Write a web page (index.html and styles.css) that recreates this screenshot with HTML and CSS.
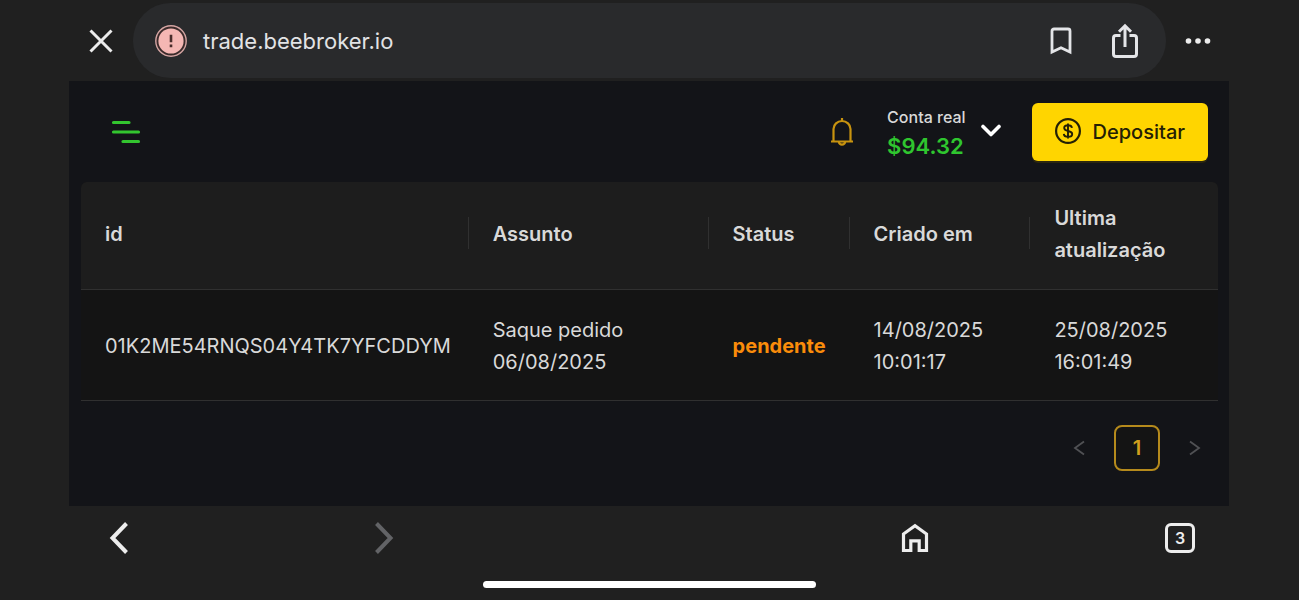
FILE: index.html
```html
<!DOCTYPE html>
<html lang="pt-BR">
<head>
<meta charset="utf-8">
<meta name="viewport" content="width=device-width, initial-scale=1">
<title>trade.beebroker.io</title>
<link rel="stylesheet" href="styles.css">
</head>
<body>
<div class="browser">
  <div class="toolbar">
    <button class="icon-button" type="button" aria-label="Fechar">
      <svg width="24" height="24" viewBox="0 0 24 24" fill="none" stroke="#ececec" stroke-width="3"><path d="M1.500 1.500l21 21M22.500 1.500l-21 21"/></svg>
    </button>
    <div class="address">
      <svg width="32" height="32" viewBox="0 0 32 32"><circle cx="16" cy="16" r="15.2" fill="#3a2a2a" stroke="#d5a5a3" stroke-width="1.4"/><circle cx="16" cy="16" r="12.6" fill="#f5b7b4"/><path d="M16 9.800v7.400M16 19.400v2.800" stroke="#492c2b" stroke-width="2.600"/></svg>
      <span class="address-text">trade.beebroker.io</span>
      <div class="address-actions">
        <button class="icon-button" type="button" aria-label="Favoritar">
          <svg width="22" height="28" viewBox="0 0 22 28" fill="none" stroke="#e4e5e8" stroke-width="2.800"><path d="M2 25V4a2 2 0 0 1 2-2h14a2 2 0 0 1 2 2v21l-9-4.200z"/></svg>
        </button>
        <button class="icon-button" type="button" aria-label="Compartilhar">
          <svg width="28" height="36" viewBox="0 0 28 36" fill="none" stroke="#e4e5e8" stroke-width="3"><path d="M9.500 12.500H5a2.500 2.500 0 0 0-2.500 2.500v16A2.500 2.500 0 0 0 5 33.500h18a2.500 2.500 0 0 0 2.500-2.500V15a2.500 2.500 0 0 0-2.500-2.500h-4.500M14 24V3M8 8.800l6-6 6 6"/></svg>
        </button>
      </div>
    </div>
    <button class="icon-button" type="button" aria-label="Mais opções">
      <svg width="26" height="6" viewBox="0 0 26 6" fill="#ececec"><circle cx="3.500" cy="3" r="2.800"/><circle cx="13" cy="3" r="2.800"/><circle cx="22.500" cy="3" r="2.800"/></svg>
    </button>
  </div>

  <main class="app">
    <header class="app-header">
      <button class="menu-button" type="button" aria-label="Menu">
        <svg width="30" height="24" viewBox="0 0 30 24" stroke="#33c52f" stroke-width="3.200" stroke-linecap="round"><path d="M2.500 2.500h15.500M2.500 12h25M12 21.500h15.500"/></svg>
      </button>
      <div class="header-actions">
        <button class="bell-button" type="button" aria-label="Notificações">
          <svg width="22" height="28" viewBox="0 0 22 28" fill="none" stroke="#c8930f" stroke-width="2.200"><path d="M0 23.500h22M2.500 23.500V11a8.500 8 0 0 1 17 0v12.500M11 0v3M7.800 23.500a3.200 3.200 0 0 0 6.400 0"/></svg>
        </button>
        <button class="account" type="button">
          <span class="account-text"><span class="account-label">Conta real</span><span class="account-value">$94.32</span></span>
          <svg width="22" height="16" viewBox="0 0 22 16" fill="none" stroke="#fff" stroke-width="3.600" stroke-linecap="round" stroke-linejoin="round"><path d="M3 2.500l8 8 8-8"/></svg>
        </button>
        <button class="deposit" type="button">
          <svg width="28" height="30" viewBox="0 0 28 30" fill="none" stroke="#242005" stroke-width="2.200"><circle cx="14" cy="14" r="11.900"/><path stroke-width="1.900" d="M14 6.500v15M18 10.800c-.3-1.700-1.800-2.600-4-2.600s-3.800 1-3.800 2.800c0 4.200 8 1.800 8 6 0 1.900-1.700 2.900-4.100 2.900-2.500 0-4.100-1.100-4.300-3"/></svg>
          <span>Depositar</span>
        </button>
      </div>
    </header>

    <section class="content">
      <table class="tickets">
        <colgroup><col class="col-id"><col class="col-subject"><col class="col-status"><col class="col-created"><col class="col-updated"></colgroup>
        <thead>
          <tr><th scope="col">id</th><th scope="col">Assunto</th><th scope="col">Status</th><th scope="col">Criado em</th><th scope="col">Ultima atualização</th></tr>
        </thead>
        <tbody>
          <tr><td>01K2ME54RNQS04Y4TK7YFCDDYM</td><td>Saque pedido<br>06/08/2025</td><td class="pending">pendente</td><td>14/08/2025 10:01:17</td><td>25/08/2025 16:01:49</td></tr>
        </tbody>
      </table>
      <nav class="pagination" aria-label="Paginação">
        <button class="page-button" type="button" aria-label="Página anterior" disabled>
          <svg width="12" height="16" viewBox="0 0 12 16" fill="none" stroke="#505154" stroke-width="1.800"><path d="M11 1.500L2 8l9 6.500"/></svg>
        </button>
        <button class="page-button page-current" type="button" aria-current="page">1</button>
        <button class="page-button" type="button" aria-label="Próxima página" disabled>
          <svg width="12" height="16" viewBox="0 0 12 16" fill="none" stroke="#505154" stroke-width="1.800"><path d="M1 1.500L10 8l-9 6.500"/></svg>
        </button>
      </nav>
    </section>
  </main>

  <footer class="bottom">
    <nav class="bottom-nav" aria-label="Navegador">
      <button class="nav-button" type="button" aria-label="Voltar">
        <svg width="20" height="32" viewBox="0 0 20 32" fill="none" stroke="#ededed" stroke-width="4"><path d="M17.500 1.500L3.500 16l14 14.500"/></svg>
      </button>
      <button class="nav-button" type="button" aria-label="Avançar" disabled>
        <svg width="20" height="32" viewBox="0 0 20 32" fill="none" stroke="#626366" stroke-width="4"><path d="M2.500 1.500L16.500 16l-14 14.500"/></svg>
      </button>
      <button class="nav-button nav-home" type="button" aria-label="Início">
        <svg width="28" height="30" viewBox="0 0 28 30" fill="none" stroke="#ededed" stroke-width="3.200"><path d="M2.500 27.500V11L14 2.800 25.500 11v16.500h-7.300V17.800H9.800v9.700z"/></svg>
      </button>
      <button class="nav-button" type="button" aria-label="Abas abertas"><span class="tab-count">3</span></button>
    </nav>
    <div class="home-indicator"></div>
  </footer>
</div>
</body>
</html>
```
FILE: styles.css
```css
* {
  box-sizing: border-box;
}

body {
  margin: 0;
  background: #202020;
  color: #d9d9d9;
  font-family: Inter, "Liberation Sans", sans-serif;
  font-size: 20px;
  line-height: 32px;
}

button {
  display: flex;
  align-items: center;
  justify-content: center;
  margin: 0;
  padding: 0;
  border: 0;
  background: none;
  color: inherit;
  font: inherit;
}

svg {
  display: block;
  flex: none;
}

.browser {
  display: flex;
  flex-direction: column;
  min-height: 100vh;
}

.toolbar {
  display: flex;
  align-items: center;
  padding: 3px 69px;
}

.icon-button {
  width: 64px;
  height: 64px;
}

.address {
  display: flex;
  flex: 1;
  align-items: center;
  gap: 16px;
  height: 75px;
  padding: 0 9px 0 22px;
  border-radius: 38px;
  background: #292a2c;
}

.address-text {
  color: #e2e3e5;
  font-size: 22px;
}

.address-actions {
  display: flex;
  margin-left: auto;
}

.app {
  flex: 1;
  margin: 0 70px 0 69px;
  background: #131418;
}

.app-header {
  display: flex;
  align-items: center;
  justify-content: space-between;
  padding: 22px 21px 21px 42px;
}

.header-actions {
  display: flex;
  align-items: center;
}

.account {
  gap: 14px;
  margin: 0 30px 0 34px;
}

.account-text {
  display: flex;
  flex-direction: column;
  text-align: left;
}

.account-label {
  font-size: 16px;
  font-weight: 500;
  line-height: 28px;
}

.account-value {
  color: #2fc62f;
  font-size: 22px;
  font-weight: 600;
  line-height: 30px;
}

.deposit {
  gap: 11px;
  height: 58px;
  padding: 0 23px 0 22px;
  border-radius: 6px;
  background: #ffd500;
  box-shadow: 0 2px 0 #2c270f;
  color: #242005;
  font-weight: 500;
}

.content {
  padding: 0 11px 0 12px;
}

.tickets {
  width: 100%;
  table-layout: fixed;
  border-collapse: separate;
  border-spacing: 0;
  background: #141414;
  border-radius: 6px 6px 0 0;
}

.col-id {
  width: 34.1%;
}

.col-subject {
  width: 21.1%;
}

.col-status {
  width: 12.4%;
}

.col-created {
  width: 15.9%;
}

.col-updated {
  width: 16.5%;
}

.tickets th,
.tickets td {
  padding: 24px 24px 22px;
  border-bottom: 1px solid #303030;
  text-align: left;
}

.tickets th {
  padding: 20px 24px 23px;
  background: linear-gradient(#303030, #303030) right 35px / 1px 32px no-repeat #1d1d1d;
  font-weight: 600;
}

.tickets th:first-child {
  border-radius: 6px 0 0 0;
}

.tickets th:last-child {
  border-radius: 0 6px 0 0;
  background: #1d1d1d;
}

.tickets .pending {
  color: #fa8c0a;
  font-weight: 700;
}

.pagination {
  display: flex;
  justify-content: flex-end;
  gap: 12px;
  padding: 24px 0 35px;
}

.page-button {
  width: 46px;
  height: 46px;
}

.page-current {
  border: 2px solid #b58a1c;
  border-radius: 8px;
  background: #141414;
  color: #d0a01e;
  font-weight: 600;
}

.bottom {
  padding: 10px 97px 12px;
}

.bottom-nav {
  display: grid;
  grid-template-columns: repeat(5, 44px);
  justify-content: space-between;
}

.nav-button {
  height: 44px;
}

.nav-home {
  grid-column: 4;
}

.tab-count {
  width: 30px;
  height: 30px;
  border: 3px solid #ededed;
  border-radius: 6px;
  color: #ededed;
  font-size: 16px;
  font-weight: 600;
  line-height: 24px;
}

.home-indicator {
  width: 30%;
  min-width: 333px;
  height: 7px;
  margin: 21px auto 0;
  border-radius: 4px;
  background: #fff;
}
```
